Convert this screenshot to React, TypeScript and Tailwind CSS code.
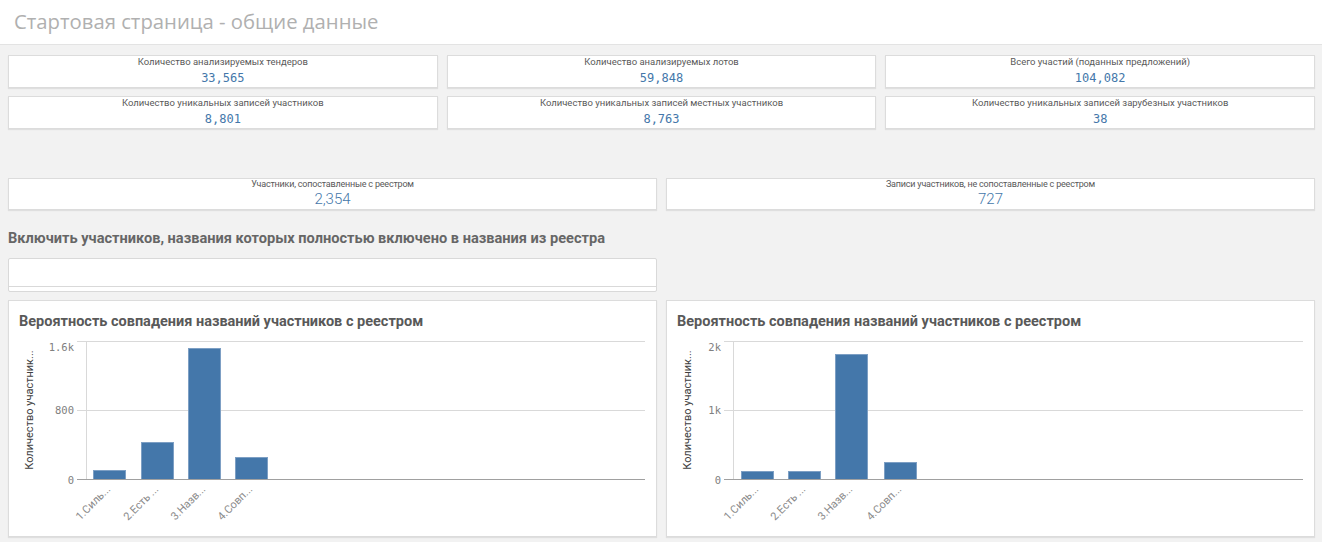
const kpiTop = [
  { label: "Количество анализируемых тендеров", value: "33,565" },
  { label: "Количество анализируемых лотов", value: "59,848" },
  { label: "Всего участий (поданных предложений)", value: "104,082" },
  { label: "Количество уникальных записей участников", value: "8,801" },
  { label: "Количество уникальных записей местных участников", value: "8,763" },
  { label: "Количество уникальных записей зарубезных участников", value: "38" },
];

const kpiMatch = [
  { label: "Участники, сопоставленные с реестром", value: "2,354" },
  { label: "Записи участников, не сопоставленные с реестром", value: "727" },
];

const categories = ["1.Силь...", "2.Есть ...", "3.Назв...", "4.Совп..."];

type ChartProps = {
  axisX: number;
  ticks: string[];
  bars: { x: number; top: number }[];
};

function KpiCard({ label, value }: { label: string; value: string }) {
  return (
    <div className="h-[33px] bg-white border border-[#dcdcdc] shadow-[0_1px_1px_rgba(0,0,0,0.08)] flex flex-col items-center">
      <div className="text-[9.5px] leading-[12px] text-[#595959]">{label}</div>
      <div className="mt-[2px] text-[12px] leading-[16px] text-[#4477aa] font-['DejaVu_Sans_Mono',monospace]">
        {value}
      </div>
    </div>
  );
}

function MatchCard({ label, value }: { label: string; value: string }) {
  return (
    <div className="h-[32px] bg-white border border-[#dcdcdc] shadow-[0_1px_1px_rgba(0,0,0,0.08)] flex flex-col items-center">
      <div className="text-[9px] leading-[11px] text-[#595959] tracking-[-0.2px]">{label}</div>
      <div className="text-[15px] leading-[18px] text-[#4477aa] font-light">{value}</div>
    </div>
  );
}

function BarChart({ axisX, ticks, bars }: ChartProps) {
  const gridStart = axisX - 9;
  const tickX = axisX - 12;
  return (
    <div className="h-[237px] bg-white border border-[#dcdcdc] shadow-[0_1px_1px_rgba(0,0,0,0.08)] flex flex-col">
      <div className="pt-[13px] pl-[10px] h-[35px] text-[14.5px] leading-[16px] font-bold text-[#595959]">
        Вероятность совпадения названий участников с реестром
      </div>
      <svg width="647" height="199" className="block">
        <text
          x="0"
          y="0"
          transform="translate(24 74) rotate(-90)"
          textAnchor="middle"
          fontSize="11"
          fill="#404040"
          fontFamily="Roboto, sans-serif"
        >
          Количество участник...
        </text>
        <line x1={gridStart} y1="5.5" x2="636" y2="5.5" stroke="#d9d9d9" />
        <line x1={gridStart} y1="74.5" x2="636" y2="74.5" stroke="#d9d9d9" />
        <line x1={axisX + 0.5} y1="5" x2={axisX + 0.5} y2="143" stroke="#d9d9d9" />
        {bars.map((b, i) => (
          <rect
            key={i}
            x={b.x + 0.5}
            y={b.top + 0.5}
            width="32"
            height={143 - b.top}
            fill="#4477aa"
            stroke="#7d9fc4"
            strokeWidth="1"
          />
        ))}
        <line x1={gridStart} y1="143.5" x2="636" y2="143.5" stroke="#a0a0a0" />
        {ticks.map((t, i) => (
          <text
            key={t}
            x={tickX}
            y={[15, 78, 148][i]}
            textAnchor="end"
            fontSize="10.5"
            fill="#808080"
            fontFamily="DejaVu Sans Mono, monospace"
          >
            {t}
          </text>
        ))}
        {bars.map((b, i) => (
          <text
            key={categories[i]}
            x="0"
            y="0"
            transform={`translate(${b.x + 18} 154) rotate(-45)`}
            textAnchor="end"
            fontSize="11"
            fill="#8a8a8a"
            fontFamily="Roboto, sans-serif"
          >
            {categories[i]}
          </text>
        ))}
      </svg>
    </div>
  );
}

export default function App() {
  return (
    <div className="w-[1322px] h-[542px] overflow-hidden bg-[#f2f2f2] font-['Roboto',sans-serif]">
      <header className="h-[45px] bg-white border-b border-[#e3e3e3] flex items-center pl-[14px]">
        <h1 className="text-[20.3px] leading-[24px] text-[#b0b0b0] font-['Open_Sans',sans-serif] -mt-[2px]">
          Стартовая страница - общие данные
        </h1>
      </header>

      <main className="pl-2 pr-[7px] pt-[10px]">
        <div className="grid grid-cols-3 gap-x-[9px] gap-y-[8px]">
          {kpiTop.map((k) => (
            <KpiCard key={k.label} {...k} />
          ))}
        </div>

        <div className="mt-[49px] grid grid-cols-2 gap-x-[9px]">
          {kpiMatch.map((k) => (
            <MatchCard key={k.label} {...k} />
          ))}
        </div>

        <div className="mt-[19px] h-[20px] flex items-center text-[14.6px] font-bold text-[#666666]">
          Включить участников, названия которых полностью включено в названия из реестра
        </div>

        <div className="mt-[9px] w-[649px] h-[34px] bg-white border border-[#d9d9d9] rounded-[2px]">
          <div className="h-[28px] border-b border-[#d9d9d9]" />
        </div>

        <div className="mt-[8px] grid grid-cols-2 gap-x-[9px]">
          <BarChart
            axisX={77}
            ticks={["1.6k", "800", "0"]}
            bars={[
              { x: 84, top: 134 },
              { x: 132, top: 106 },
              { x: 179, top: 12 },
              { x: 226, top: 121 },
            ]}
          />
          <BarChart
            axisX={66}
            ticks={["2k", "1k", "0"]}
            bars={[
              { x: 74, top: 135 },
              { x: 121, top: 135 },
              { x: 168, top: 18 },
              { x: 217, top: 126 },
            ]}
          />
        </div>
      </main>
    </div>
  );
}
